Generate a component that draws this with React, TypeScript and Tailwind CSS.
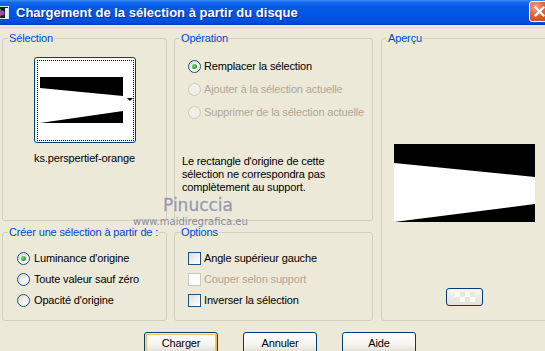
import React from "react";

function Radio({ checked = false, disabled = false }: { checked?: boolean; disabled?: boolean }) {
  return (
    <span
      className={
        disabled
          ? "flex h-[13px] w-[13px] shrink-0 items-center justify-center rounded-full border border-[#cac8bb] bg-[#f1efe6]"
          : "flex h-[13px] w-[13px] shrink-0 items-center justify-center rounded-full border border-[#1c5180] bg-[linear-gradient(135deg,#d8d5c9_0%,#f4f3ee_55%,#ffffff_100%)]"
      }
    >
      {checked && (
        <span className="h-[5px] w-[5px] rounded-full bg-[radial-gradient(circle_at_35%_35%,#7be07b_0%,#21a121_70%,#1a8a1a_100%)]" />
      )}
    </span>
  );
}

function Check({ disabled = false }: { disabled?: boolean }) {
  return (
    <span
      className={
        disabled
          ? "h-[13px] w-[13px] shrink-0 border border-[#cac8bb] bg-[#fdfdfb]"
          : "h-[13px] w-[13px] shrink-0 border border-[#1c5180] bg-[linear-gradient(135deg,#dcdcd6_0%,#f2f2ef_55%,#ffffff_100%)]"
      }
    />
  );
}

function Group({
  label,
  className,
  children,
}: {
  label: string;
  className: string;
  children?: React.ReactNode;
}) {
  return (
    <div className={"relative shrink-0 rounded-[3px] border border-[#d0d0bf] " + className}>
      <span className="absolute -top-[7px] left-[5px] whitespace-nowrap bg-[#ece9d8] px-[1px] leading-[13px] text-[#0046d5]">
        {label}
      </span>
      {children}
    </div>
  );
}

function XPButton({ label, def = false }: { label: string; def?: boolean }) {
  return (
    <div
      className={
        def
          ? "flex h-[23px] w-[74px] shrink-0 items-center justify-center rounded-[3px] border border-[#003c74] bg-[linear-gradient(to_bottom,#ffffff_0%,#f5f4ef_55%,#e6e3d8_85%,#d6d0c5_100%)] shadow-[inset_0_1px_0_#fff0cf,inset_1px_0_0_#fbd98a,inset_-1px_0_0_#f6b94a,inset_0_-1px_0_#e59700,inset_0_0_0_2px_#f8c25a]"
          : "flex h-[23px] w-[74px] shrink-0 items-center justify-center rounded-[3px] border border-[#003c74] bg-[linear-gradient(to_bottom,#ffffff_0%,#f5f4ef_55%,#e6e3d8_85%,#d6d0c5_100%)]"
      }
    >
      <span className="text-[11px] leading-[13px] text-black">{label}</span>
    </div>
  );
}

export default function App() {
  return (
    <div className="relative h-[351px] w-[545px] overflow-hidden bg-[#ece9d8] font-['Liberation_Sans',Arial,sans-serif] text-[11px] leading-[13px] tracking-[-0.15px] text-black">
      {/* Title bar */}
      <div className="flex h-[25px] items-center bg-[linear-gradient(to_bottom,#3d8ef9_0%,#1467f0_10%,#055ae9_30%,#0054e3_60%,#004fdb_88%,#003fc0_100%)]">
        <svg width="16" height="16" viewBox="0 0 16 16" className="ml-[-7px] shrink-0">
          <rect x="0.5" y="1.5" width="15" height="12" fill="#1a1a2a" stroke="#d8e4f8" />
          <circle cx="5" cy="6" r="3" fill="#3cb043" />
          <circle cx="9" cy="8" r="2.5" fill="#8a4fc8" />
          <circle cx="6" cy="10" r="2" fill="#e04848" />
          <rect x="12" y="3" width="3" height="10" fill="#e8eef8" />
        </svg>
        <span className="ml-[7px] whitespace-nowrap text-[13px] font-bold tracking-[0px] text-white [text-shadow:1px_1px_0_#0b2a8c]">
          Chargement de la sélection à partir du disque
        </span>
        <div className="ml-auto mr-[-5px] mt-[-2px] flex h-[21px] w-[21px] shrink-0 items-center justify-center rounded-[3px] border border-white bg-[radial-gradient(circle_at_30%_25%,#f1a58a_0%,#e2603d_45%,#c8421d_100%)]">
          <svg width="11" height="11" viewBox="0 0 11 11">
            <path d="M1.5 1.5 L9.5 9.5 M9.5 1.5 L1.5 9.5" stroke="#ffffff" strokeWidth="2.2" strokeLinecap="square" />
          </svg>
        </div>
      </div>
      <div className="h-[2px]" />
      <div className="h-px bg-[#dedac9]" />

      {/* Main */}
      <div className="flex pl-[2px] pt-[10px]">
        {/* Left column */}
        <div className="flex w-[165px] shrink-0 flex-col gap-[11px]">
          <Group label="Sélection" className="h-[183px] w-[165px]">
            <div className="flex flex-col items-center pt-[18px]">
              <div className="relative h-[86px] w-[102px] rounded-[3px] border border-[#003c74] bg-white">
                <div className="absolute bottom-[1px] left-[2px] right-[1px] top-[2px] border border-dotted border-black" />
                <svg className="absolute left-[5px] top-[19px]" width="83" height="46" viewBox="0 0 83 46">
                  <polygon points="0,0 83,0 83,19 0,11" fill="#000" />
                  <polygon points="0,46 83,34 83,46" fill="#000" />
                </svg>
                <div className="absolute left-[92px] top-[40px] h-0 w-0 border-l-[3px] border-r-[3px] border-t-[3px] border-l-transparent border-r-transparent border-t-black" />
              </div>
              <span className="mt-[9px] whitespace-nowrap">ks.perspertief-orange</span>
            </div>
          </Group>
          <Group label="Créer une sélection à partir de :" className="h-[89px] w-[165px]">
            <div className="flex flex-col gap-[8px] pl-[14px] pt-[19px]">
              <div className="flex items-center gap-[4px]">
                <Radio checked />
                <span>Luminance d'origine</span>
              </div>
              <div className="flex items-center gap-[4px]">
                <Radio />
                <span>Toute valeur sauf zéro</span>
              </div>
              <div className="flex items-center gap-[4px]">
                <Radio />
                <span>Opacité d'origine</span>
              </div>
            </div>
          </Group>
        </div>

        {/* Middle column */}
        <div className="ml-[7px] flex w-[199px] shrink-0 flex-col gap-[11px]">
          <Group label="Opération" className="h-[183px] w-[199px]">
            <div className="flex flex-col pl-[7px] pt-[21px]">
              <div className="flex flex-col gap-[10px] pl-[6px]">
                <div className="flex items-center gap-[3px]">
                  <Radio checked />
                  <span>Remplacer la sélection</span>
                </div>
                <div className="flex items-center gap-[3px]">
                  <Radio disabled />
                  <span className="text-[#aca899]">Ajouter à la sélection actuelle</span>
                </div>
                <div className="flex items-center gap-[3px]">
                  <Radio disabled />
                  <span className="text-[#aca899]">Supprimer de la sélection actuelle</span>
                </div>
              </div>
              <p className="mt-[36px] leading-[13px]">
                Le rectangle d'origine de cette
                <br />
                sélection ne correspondra pas
                <br />
                complètement au support.
              </p>
            </div>
          </Group>
          <Group label="Options" className="h-[89px] w-[199px]">
            <div className="flex flex-col gap-[8px] pl-[13px] pt-[19px]">
              <div className="flex items-center gap-[3px]">
                <Check />
                <span>Angle supérieur gauche</span>
              </div>
              <div className="flex items-center gap-[3px]">
                <Check disabled />
                <span className="text-[#aca899]">Couper selon support</span>
              </div>
              <div className="flex items-center gap-[3px]">
                <Check />
                <span>Inverser la sélection</span>
              </div>
            </div>
          </Group>
        </div>

        {/* Right column */}
        <div className="ml-[8px] shrink-0">
          <Group label="Aperçu" className="h-[283px] w-[167px]">
            <div className="flex flex-col items-center pt-[105px]">
              <svg width="141" height="78" viewBox="0 0 141 78" className="shrink-0">
                <rect x="0" y="0" width="141" height="78" fill="#ffffff" />
                <polygon points="0,0 141,0 141,33 0,19" fill="#000" />
                <polygon points="0,78 141,60 141,78" fill="#000" />
              </svg>
              <div className="mt-[66px] flex h-[18px] w-[37px] items-center justify-center rounded-[3px] border border-[#003c74] bg-[linear-gradient(to_bottom,#f7f6f1,#e4e1d6)]">
                <div className="grid grid-cols-4">
                  <span className="h-[5px] w-[5px] bg-white" />
                  <span className="h-[5px] w-[5px] bg-[#e9e7de]" />
                  <span className="h-[5px] w-[5px] bg-white" />
                  <span className="h-[5px] w-[5px] bg-[#e9e7de]" />
                  <span className="h-[5px] w-[5px] bg-[#e9e7de]" />
                  <span className="h-[5px] w-[5px] bg-white" />
                  <span className="h-[5px] w-[5px] bg-[#e9e7de]" />
                  <span className="h-[5px] w-[5px] bg-white" />
                </div>
              </div>
            </div>
          </Group>
        </div>
      </div>

      {/* Buttons */}
      <div className="mt-[11px] flex gap-[25px] pl-[144px]">
        <XPButton label="Charger" def />
        <XPButton label="Annuler" />
        <XPButton label="Aide" />
      </div>

      {/* Watermark */}
      <div className="pointer-events-none absolute left-[163px] top-[195px] font-['DejaVu_Sans',sans-serif] text-[17px] leading-[20px] tracking-[0px] text-[#9a9aae] [-webkit-text-stroke:0.4px_#9a9aae] [text-shadow:0_0_2px_#ffffff]">
        Pinuccia
      </div>
      <div className="pointer-events-none absolute left-[133px] top-[216px] font-['DejaVu_Sans',sans-serif] text-[10px] leading-[12px] tracking-[0px] text-[#8a8a98]">
        www.maidiregrafica.eu
      </div>
    </div>
  );
}
